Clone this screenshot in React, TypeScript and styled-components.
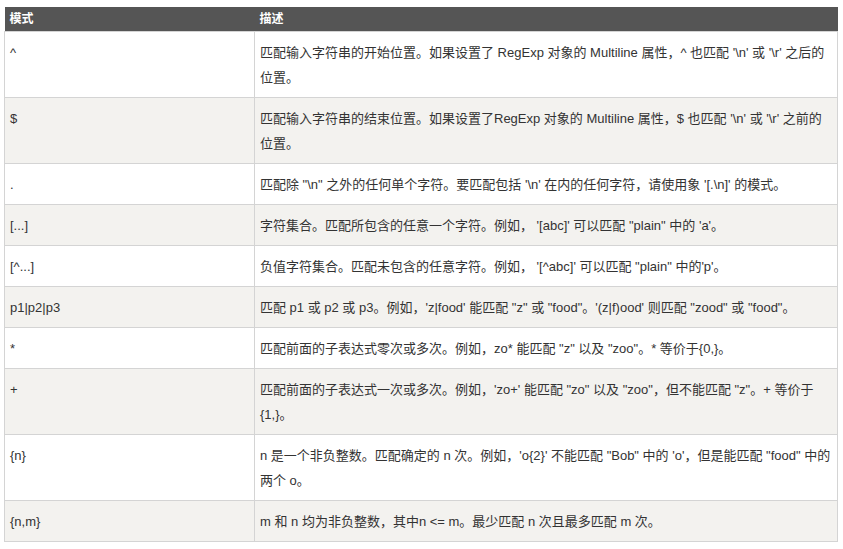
import React from "react";
import styled, { createGlobalStyle } from "styled-components";

const Global = createGlobalStyle`
  body { margin: 0; background: #fff; font-family: "Liberation Sans", Arial, "Noto Sans CJK SC", sans-serif; }
`;

const Wrap = styled.div`
  padding: 7px 5px 0 4px;
`;

const Table = styled.table`
  width: 834px;
  border-collapse: collapse;
  font-size: 13px;
  color: #333;
  table-layout: fixed;
`;

const Th = styled.th`
  background: #555;
  color: #fff;
  font-weight: bold;
  font-size: 12px;
  text-align: left;
  height: 24px;
  padding: 0 5px;
  line-height: 24px;
`;

const Row = styled.tr<{ $alt: boolean }>`
  background: ${(p) => (p.$alt ? "#f3f2ef" : "#fff")};
`;

const Td = styled.td`
  border: 1px solid #d4d4d4;
  padding: 8px 5px 7px 5px;
  line-height: 25px;
  vertical-align: top;
`;

const rows: [string, string][] = [
  ["^", "匹配输入字符串的开始位置。如果设置了 RegExp 对象的 Multiline 属性，^ 也匹配 '\\n' 或 '\\r' 之后的位置。"],
  ["$", "匹配输入字符串的结束位置。如果设置了RegExp 对象的 Multiline 属性，$ 也匹配 '\\n' 或 '\\r' 之前的位置。"],
  [".", "匹配除 \"\\n\" 之外的任何单个字符。要匹配包括 '\\n' 在内的任何字符，请使用象 '[.\\n]' 的模式。"],
  ["[...]", "字符集合。匹配所包含的任意一个字符。例如， '[abc]' 可以匹配 \"plain\" 中的 'a'。"],
  ["[^...]", "负值字符集合。匹配未包含的任意字符。例如， '[^abc]' 可以匹配 \"plain\" 中的'p'。"],
  ["p1|p2|p3", "匹配 p1 或 p2 或 p3。例如，'z|food' 能匹配 \"z\" 或 \"food\"。'(z|f)ood' 则匹配 \"zood\" 或 \"food\"。"],
  ["*", "匹配前面的子表达式零次或多次。例如，zo* 能匹配 \"z\" 以及 \"zoo\"。* 等价于{0,}。"],
  ["+", "匹配前面的子表达式一次或多次。例如，'zo+' 能匹配 \"zo\" 以及 \"zoo\"，但不能匹配 \"z\"。+ 等价于 {1,}。"],
  ["{n}", "n 是一个非负整数。匹配确定的 n 次。例如，'o{2}' 不能匹配 \"Bob\" 中的 'o'，但是能匹配 \"food\" 中的两个 o。"],
  ["{n,m}", "m 和 n 均为非负整数，其中n <= m。最少匹配 n 次且最多匹配 m 次。"],
];

export default function App() {
  return (
    <Wrap>
      <Global />
      <Table>
        <colgroup>
          <col style={{ width: 250 }} />
          <col />
        </colgroup>
        <thead>
          <tr>
            <Th>模式</Th>
            <Th>描述</Th>
          </tr>
        </thead>
        <tbody>
          {rows.map(([a, b], i) => (
            <Row key={a} $alt={i % 2 === 1}>
              <Td>{a}</Td>
              <Td>{b}</Td>
            </Row>
          ))}
        </tbody>
      </Table>
    </Wrap>
  );
}
